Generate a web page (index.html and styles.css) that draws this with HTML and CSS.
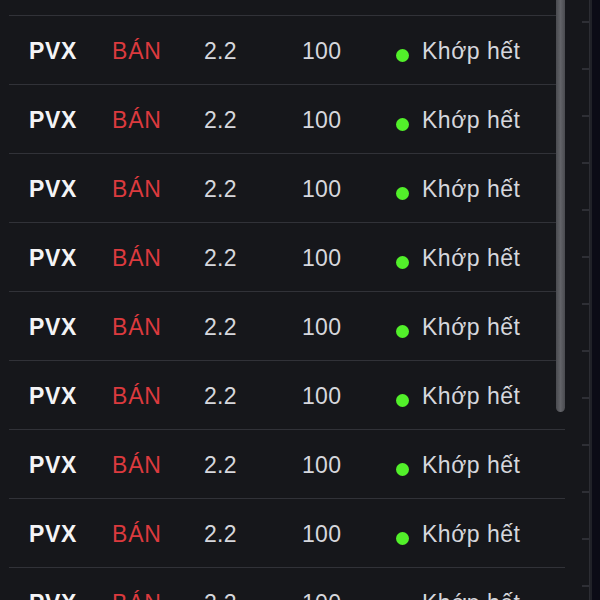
FILE: index.html
```html
<!DOCTYPE html>
<html lang="vi">
<head>
<meta charset="utf-8">
<title>Orders</title>
<link rel="stylesheet" href="styles.css">
</head>
<body>
<div class="screen">
  <div class="panel">
    <div class="list">
      <div class="row"><span class="c sym">PVX</span><span class="c side">BÁN</span><span class="c price">2.2</span><span class="c qty">100</span><span class="c status"><i class="dot"></i>Khớp hết</span></div>
      <div class="row"><span class="c sym">PVX</span><span class="c side">BÁN</span><span class="c price">2.2</span><span class="c qty">100</span><span class="c status"><i class="dot"></i>Khớp hết</span></div>
      <div class="row"><span class="c sym">PVX</span><span class="c side">BÁN</span><span class="c price">2.2</span><span class="c qty">100</span><span class="c status"><i class="dot"></i>Khớp hết</span></div>
      <div class="row"><span class="c sym">PVX</span><span class="c side">BÁN</span><span class="c price">2.2</span><span class="c qty">100</span><span class="c status"><i class="dot"></i>Khớp hết</span></div>
      <div class="row"><span class="c sym">PVX</span><span class="c side">BÁN</span><span class="c price">2.2</span><span class="c qty">100</span><span class="c status"><i class="dot"></i>Khớp hết</span></div>
      <div class="row"><span class="c sym">PVX</span><span class="c side">BÁN</span><span class="c price">2.2</span><span class="c qty">100</span><span class="c status"><i class="dot"></i>Khớp hết</span></div>
      <div class="row"><span class="c sym">PVX</span><span class="c side">BÁN</span><span class="c price">2.2</span><span class="c qty">100</span><span class="c status"><i class="dot"></i>Khớp hết</span></div>
      <div class="row"><span class="c sym">PVX</span><span class="c side">BÁN</span><span class="c price">2.2</span><span class="c qty">100</span><span class="c status"><i class="dot"></i>Khớp hết</span></div>
      <div class="row"><span class="c sym">PVX</span><span class="c side">BÁN</span><span class="c price">2.2</span><span class="c qty">100</span><span class="c status"><i class="dot"></i>Khớp hết</span></div>
    </div>
    <div class="thumb"></div>
  </div>
  <div class="rail"></div>
  <div class="edge"></div>
</div>
</body>
</html>
```
FILE: styles.css
```css
html, body {
  margin: 0;
  padding: 0;
  background: #16171b;
  overflow: hidden;
}
.screen {
  display: flex;
  width: 600px;
  height: 600px;
  overflow: hidden;
  font-family: "Liberation Sans", Arial, sans-serif;
}
.panel {
  position: relative;
  width: 590px;
  flex: none;
  padding-left: 9px;
  box-sizing: border-box;
  border-right: 1px solid #2c2d33;
}
.list {
  width: 556px;
  margin-top: 15px;
}
.row {
  display: flex;
  align-items: center;
  height: 69px;
  padding-top: 2px;
  box-sizing: border-box;
  border-top: 1px solid #313238;
  font-size: 23px;
  letter-spacing: 0.3px;
  color: #d6d7dd;
}
.c { display: block; white-space: nowrap; }
.sym { width: 83px; padding-left: 20px; font-weight: bold; color: #f4f4f6; letter-spacing: 0.6px; }
.side { width: 92px; color: #dc3a3e; letter-spacing: 0.8px; }
.price { width: 98px; }
.qty { width: 94px; }
.status { display: flex; align-items: center; letter-spacing: 0.5px; }
.dot {
  display: block;
  width: 13px;
  height: 13px;
  border-radius: 50%;
  background: #52f02a;
  margin-right: 13px;
  margin-top: 8px;
}
.thumb {
  position: absolute;
  left: 556px;
  top: -10px;
  width: 9px;
  height: 422px;
  border-radius: 0 0 5px 5px;
  background: linear-gradient(90deg, #4a4b50, #626368 50%, #4a4b50);
}
.rail {
  flex: none;
  width: 2px;
  background: #202128;
}
.edge {
  flex: 1;
  background: #0b0b16;
}
.panel::after {
  content: "";
  position: absolute;
  right: 0;
  top: 0;
  width: 7px;
  height: 600px;
  background: repeating-linear-gradient(180deg, transparent 0 21px, #2e2f35 21px 23px, transparent 23px 47px);
}
```
